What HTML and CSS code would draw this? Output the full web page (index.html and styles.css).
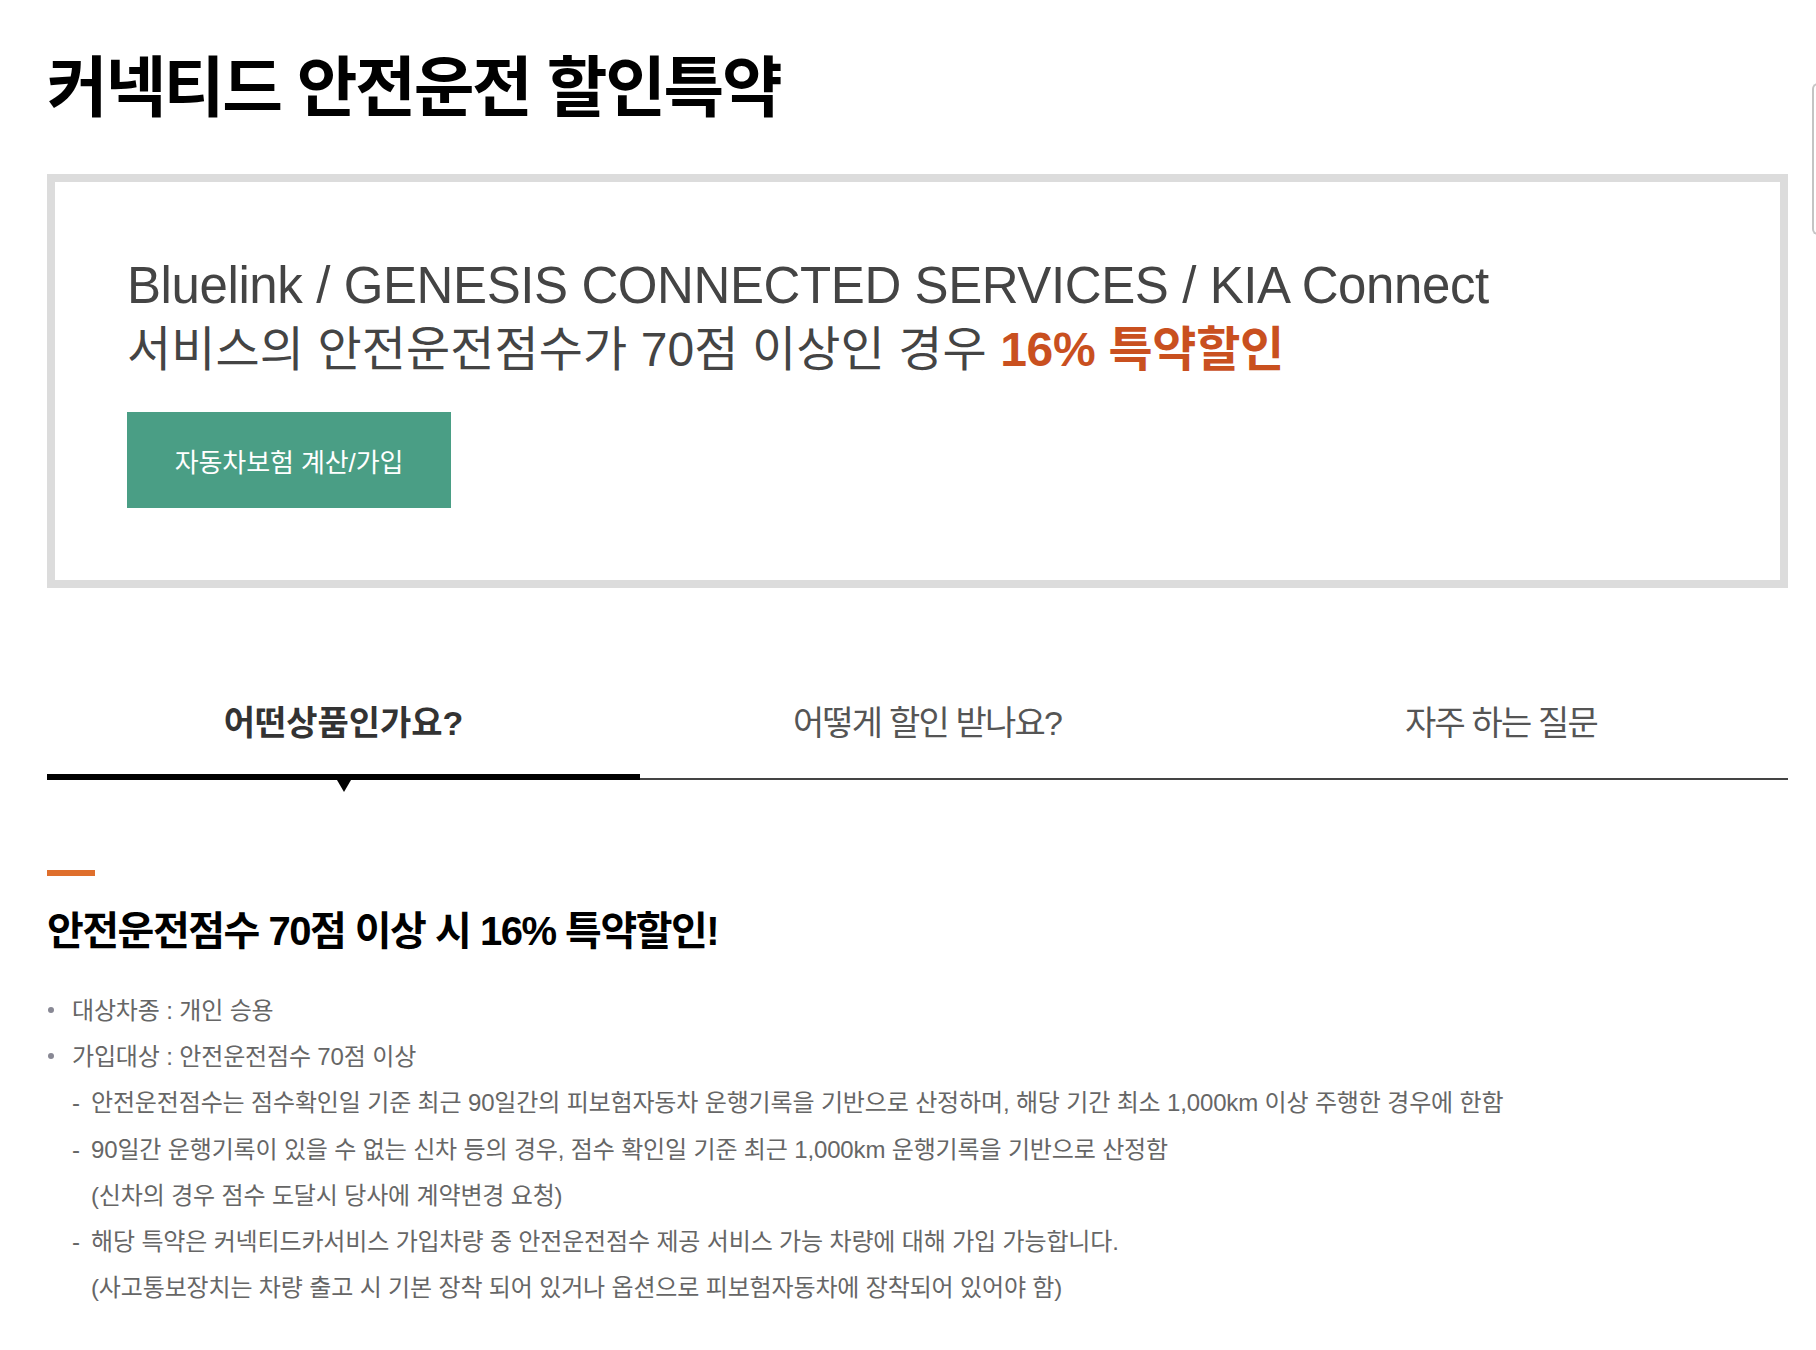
FILE: index.html
```html
<!DOCTYPE html>
<html lang="ko">
<head>
<meta charset="utf-8">
<title>커넥티드 안전운전 할인특약</title>
<link rel="stylesheet" href="styles.css">
</head>
<body>
<div class="page">
  <h1 class="title">커넥티드 안전운전 할인특약</h1>

  <section class="promo">
    <div class="promo-text">
      <span class="promo-line1">Bluelink / GENESIS CONNECTED SERVICES / KIA Connect</span>
      <span class="promo-line2">서비스의 안전운전점수가 70점 이상인 경우 <strong class="accent">16% 특약할인</strong></span>
    </div>
    <a class="btn" href="#">자동차보험 계산/가입</a>
  </section>

  <nav class="tabs">
    <div class="tab active">어떤상품인가요?</div>
    <div class="tab">어떻게 할인 받나요?</div>
    <div class="tab">자주 하는 질문</div>
  </nav>

  <section class="content">
    <div class="bar"></div>
    <h2 class="subtitle">안전운전점수 70점 이상 시 16% 특약할인!</h2>
    <ul class="list">
      <li class="dot">대상차종 : 개인 승용</li>
      <li class="dot">가입대상 : 안전운전점수 70점 이상</li>
      <li class="dash">안전운전점수는 점수확인일 기준 최근 90일간의 피보험자동차 운행기록을 기반으로 산정하며, 해당 기간 최소 1,000km 이상 주행한 경우에 한함</li>
      <li class="dash">90일간 운행기록이 있을 수 없는 신차 등의 경우, 점수 확인일 기준 최근 1,000km 운행기록을 기반으로 산정함<br>(신차의 경우 점수 도달시 당사에 계약변경 요청)</li>
      <li class="dash">해당 특약은 커넥티드카서비스 가입차량 중 안전운전점수 제공 서비스 가능 차량에 대해 가입 가능합니다.<br>(사고통보장치는 차량 출고 시 기본 장착 되어 있거나 옵션으로 피보험자동차에 장착되어 있어야 함)</li>
    </ul>
  </section>
</div>
<div class="scroll-edge"></div>
</body>
</html>
```

FILE: styles.css
```css
* { box-sizing: border-box; }
html, body { margin: 0; padding: 0; background: #fff; }
body {
  font-family: "Liberation Sans", "Noto Sans CJK KR", sans-serif;
  color: #333;
}
.page {
  width: 1741px;
  margin-left: 47px;
}
.title {
  margin: 0;
  padding-top: 32px;
  font-family: "Noto Sans CJK KR", sans-serif;
  font-size: 66px;
  line-height: 100px;
  font-weight: 700;
  letter-spacing: -2.3px;
  color: #000;
}
.promo {
  margin-top: 42px;
  height: 414px;
  border: 8px solid #dcdcdc;
  padding: 74px 0 0 72px;
}
.promo-text { color: #444; }
.promo-line1 {
  display: block;
  font-size: 51px;
  line-height: 60px;
  letter-spacing: -0.4px;
}
.promo-line2 {
  display: block;
  padding-top: 4px;
  font-size: 48px;
  line-height: 60px;
  letter-spacing: 0.1px;
}
.accent { color: #c9501f; font-weight: 700; letter-spacing: -0.3px; }
.btn {
  display: flex;
  align-items: center;
  justify-content: center;
  width: 324px;
  height: 96px;
  margin-top: 32px;
  background: #4a9e85;
  color: #fff;
  text-decoration: none;
  font-size: 26px;
  letter-spacing: -0.1px;
}
.tabs {
  display: grid;
  grid-template-columns: 593px 574px 574px;
  margin-top: 90px;
  border-bottom: 2px solid #444;
}
.tab {
  position: relative;
  text-align: center;
  font-size: 34px;
  line-height: 90px;
  padding-bottom: 10px;
  letter-spacing: -1.8px;
  color: #555;
}
.tab.active {
  font-weight: 700;
  color: #333;
  letter-spacing: 0;
}
.tab.active::before {
  content: "";
  position: absolute;
  left: 0; right: 0; bottom: -2px;
  height: 6px;
  background: #000;
}
.tab.active::after {
  content: "";
  position: absolute;
  left: 50%;
  bottom: -14px;
  margin-left: -7px;
  border-left: 7px solid transparent;
  border-right: 7px solid transparent;
  border-top: 12px solid #000;
}
.content { padding-top: 90px; }
.bar { width: 48px; height: 6px; background: #df6f2c; }
.subtitle {
  margin: 27px 0 0;
  font-size: 40px;
  line-height: 56px;
  font-weight: 700;
  letter-spacing: -1.5px;
  color: #000;
}
.list {
  list-style: none;
  margin: 29px 0 0;
  padding: 0;
  font-size: 24px;
  line-height: 46.2px;
  letter-spacing: -0.15px;
  color: #666;
}
.list li { position: relative; }
.list .dot { padding-left: 25px; }
.list .dot::before {
  content: "";
  position: absolute;
  left: 1px; top: 19px;
  width: 6px; height: 6px;
  border-radius: 50%;
  background: #888894;
}
.list .dash { padding-left: 44px; }
.list .dash::before {
  content: "-";
  position: absolute;
  left: 25px; top: 0;
}
.scroll-edge {
  position: absolute;
  top: 83px;
  left: 1812px;
  width: 8px;
  height: 152px;
  border: 2px solid #c4c4c4;
  border-right: none;
  border-radius: 6px 0 0 6px;
}
```
